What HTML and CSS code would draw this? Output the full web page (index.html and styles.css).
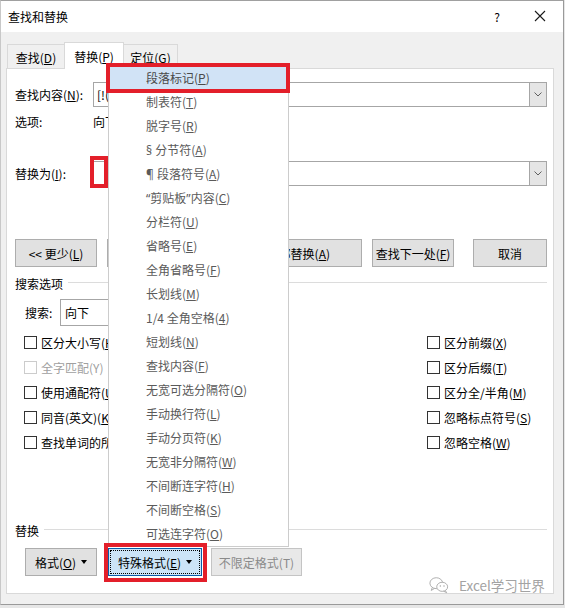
FILE: index.html
```html
<!DOCTYPE html>
<html lang="zh-CN">
<head>
<meta charset="utf-8">
<title>查找和替换</title>
<link rel="stylesheet" href="styles.css">
</head>
<body>
<div class="window">
  <div class="titlebar">
    <span class="title">查找和替换</span>
    <span class="help">?</span>
    <svg class="close" width="12" height="12" viewBox="0 0 12 12"><path d="M1 1L11 11M11 1L1 11" stroke="#1a1a1a" stroke-width="1.1" fill="none"/></svg>
  </div>
  <div class="tabs">
    <div class="tab t1">查找(<u>D</u>)</div>
    <div class="tab t2 active">替换(<u>P</u>)</div>
    <div class="tab t3">定位(<u>G</u>)</div>
  </div>
  <div class="panel">
    <div class="row row-find">
      <span class="lbl">查找内容(<u>N</u>):</span>
      <div class="combo"><span class="combo-text">[!(</span><span class="combo-btn"><svg width="8" height="5" viewBox="0 0 8 5"><path d="M0.5 0.5L4 4L7.5 0.5" stroke="#606060" fill="none"/></svg></span></div>
    </div>
    <div class="row row-opts"><span class="lbl">选项:</span><span>向下</span></div>
    <div class="row row-replace">
      <span class="lbl">替换为(<u>I</u>):</span>
      <div class="combo"><span class="combo-text"></span><span class="combo-btn"><svg width="8" height="5" viewBox="0 0 8 5"><path d="M0.5 0.5L4 4L7.5 0.5" stroke="#606060" fill="none"/></svg></span></div>
    </div>
    <div class="btnrow">
      <div class="btn b-less">&lt;&lt; 更少(<u>L</u>)</div>
      <div class="btn b-rep"></div>
      <div class="btn b-all"><span class="clip-text">全部替换(<u>A</u>)</span></div>
      <div class="btn b-next">查找下一处(<u>F</u>)</div>
      <div class="btn b-cancel">取消</div>
    </div>
    <div class="group-title g1"><span>搜索选项</span></div>
    <div class="row row-search"><span class="lbl-s">搜索:</span><div class="select">向下</div></div>
    <div class="checks">
      <div class="col col-left">
        <div class="chk"><span class="box"></span><span class="cut">区分大小写(<u>H</u>)</span></div>
        <div class="chk disabled"><span class="box"></span><span class="cut">全字匹配(Y)</span></div>
        <div class="chk"><span class="box"></span><span class="cut">使用通配符(<u>U</u>)</span></div>
        <div class="chk"><span class="box"></span><span class="cut">同音(英文)(<u>K</u>)</span></div>
        <div class="chk"><span class="box"></span><span class="cut">查找单词的所有形式(英文)(<u>W</u>)</span></div>
      </div>
      <div class="col col-right">
        <div class="chk"><span class="box"></span>区分前缀(<u>X</u>)</div>
        <div class="chk"><span class="box"></span>区分后缀(<u>T</u>)</div>
        <div class="chk"><span class="box"></span>区分全/半角(<u>M</u>)</div>
        <div class="chk"><span class="box"></span>忽略标点符号(<u>S</u>)</div>
        <div class="chk"><span class="box"></span>忽略空格(<u>W</u>)</div>
      </div>
    </div>
    <div class="group-title g2"><span>替换</span></div>
    <div class="btnrow2">
      <div class="btn b-fmt">格式(<u>O</u>)<span class="tri"></span></div>
      <div class="btn b-special">特殊格式(<u>E</u>)<span class="tri"></span></div>
      <div class="btn b-nofmt">不限定格式(T)</div>
    </div>
  </div>

  <div class="menu">
    <div class="item hl">段落标记(<u>P</u>)</div>
    <div class="item">制表符(<u>T</u>)</div>
    <div class="item">脱字号(<u>R</u>)</div>
    <div class="item"><span class="lat">§ </span>分节符(<u>A</u>)</div>
    <div class="item"><span class="lat">¶ </span>段落符号(<u>A</u>)</div>
    <div class="item"><span class="lat">“</span>剪贴板<span class="lat">”</span>内容(<u>C</u>)</div>
    <div class="item">分栏符(<u>U</u>)</div>
    <div class="item">省略号(<u>E</u>)</div>
    <div class="item">全角省略号(<u>F</u>)</div>
    <div class="item">长划线(<u>M</u>)</div>
    <div class="item">1/4 全角空格(<u>4</u>)</div>
    <div class="item">短划线(<u>N</u>)</div>
    <div class="item">查找内容(<u>F</u>)</div>
    <div class="item">无宽可选分隔符(<u>O</u>)</div>
    <div class="item">手动换行符(<u>L</u>)</div>
    <div class="item">手动分页符(<u>K</u>)</div>
    <div class="item">无宽非分隔符(<u>W</u>)</div>
    <div class="item">不间断连字符(<u>H</u>)</div>
    <div class="item">不间断空格(<u>S</u>)</div>
    <div class="item">可选连字符(<u>O</u>)</div>
  </div>

  <div class="mark m1"></div>
  <div class="mark m2"></div>
  <div class="mark m3"></div>

  <div class="watermark">
    <svg width="20" height="18" viewBox="0 0 22 19"><ellipse cx="8" cy="7.5" rx="7" ry="6" fill="none" stroke="#a8a8a8" stroke-width="1"/><path d="M3.5 12.5L2.5 15.5L6 13.3" fill="none" stroke="#a8a8a8" stroke-width="1"/><ellipse cx="14.5" cy="11.5" rx="6" ry="5" fill="#fff" stroke="#a8a8a8" stroke-width="1"/><path d="M18 15.8L19.5 18L16 16.3" fill="none" stroke="#a8a8a8" stroke-width="1"/><circle cx="12.5" cy="10.5" r="0.8" fill="#a8a8a8"/><circle cx="16.5" cy="10.5" r="0.8" fill="#a8a8a8"/></svg>
    <span>Excel学习世界</span>
  </div>
</div>
</body>
</html>
```

FILE: styles.css
```css
* { box-sizing: border-box; }
html, body { margin: 0; padding: 0; }
body {
  width: 565px;
  height: 608px;
  background: #e6e6e6;
  font-family: "Noto Sans CJK SC", "Microsoft YaHei", sans-serif;
  font-size: 12px;
  color: #000;
  overflow: hidden;
}
u { text-decoration: underline; text-underline-offset: 1px; }
.lat { font-family: "Noto Sans", "Liberation Sans", sans-serif; }

.window {
  position: relative;
  width: 564px;
  height: 605px;
  background: #f0f0f0;
  border: 1px solid #9a9a9a;
  border-left-color: #c8c8c8;
  border-top-color: #a0a0a0;
}

.titlebar {
  height: 31px;
  background: #fff;
  display: flex;
  align-items: center;
  padding-left: 7px;
  padding-bottom: 1px;
}
.title { font-size: 12px; flex: 1; }
.help { font-size: 12px; margin-right: 34px; }
.close { margin-right: 17px; }

.tabs {
  display: flex;
  align-items: flex-end;
  height: 26px;
  margin-top: 10px;
  margin-left: 6px;
  position: relative;
  z-index: 2;
}
.tab {
  height: 24px;
  display: flex;
  align-items: center;
  justify-content: center;
  border: 1px solid #d9d9d9;
  border-bottom: none;
  background: #f0f0f0;
  padding-top: 2px;
}
.t1 { width: 57px; border-right: none; }
.t2 { width: 60px; }
.t3 { width: 54px; border-left: none; }
.tab.active {
  height: 27px;
  margin-bottom: -1px;
  background: #fff;
  padding-top: 0;
}

.panel {
  position: relative;
  z-index: 1;
  margin-left: 5px;
  width: 548px;
  height: 526px;
  background: #fff;
  border: 1px solid #d9d9d9;
  padding-left: 8px;
  padding-right: 6px;
}

.row { display: flex; align-items: center; }
.lbl { width: 78px; flex: none; }
.row-find { margin-top: 13px; height: 25px; }
.row-opts { height: 28px; }
.row-replace { margin-top: 26px; height: 25px; }

.combo {
  width: 455px;
  height: 25px;
  border: 1px solid #a6a6a6;
  display: flex;
  align-items: stretch;
}
.combo-text { flex: 1; padding-left: 3px; display: flex; align-items: center; }
.combo-btn {
  width: 17px;
  background: #e5e5e5;
  border-left: 1px solid #a6a6a6;
  display: flex;
  align-items: center;
  justify-content: center;
}

.btn {
  height: 28px;
  background: #e1e1e1;
  border: 1px solid #adadad;
  display: flex;
  align-items: center;
  justify-content: center;
  flex: none;
}
.btnrow { display: flex; margin-top: 53px; }
.b-less { width: 82px; }
.b-rep { width: 117px; margin-left: 10px; }
.b-all { width: 128px; margin-left: 10px; justify-content: flex-end; padding-right: 31px; }
.clip-text { display: block; width: 42px; overflow: hidden; direction: rtl; white-space: nowrap; }
.clip-text u { direction: ltr; }
.b-next { width: 82px; margin-left: 10px; }
.b-cancel { width: 74px; margin-left: 19px; }

.group-title {
  display: flex;
  align-items: center;
  height: 16px;
}
.group-title::after {
  content: "";
  flex: 1;
  border-top: 1px solid #dcdcdc;
  margin-left: 5px;
  margin-top: -1px;
}
.g1 { margin-top: 8px; }
.g2 { margin-top: 67px; }

.row-search { margin-top: 8px; height: 27px; padding-left: 10px; }
.lbl-s { width: 35px; }
.select {
  width: 170px;
  height: 27px;
  border: 1px solid #a6a6a6;
  display: flex;
  align-items: center;
  padding-left: 4px;
}

.checks { display: flex; margin-top: 4px; padding-left: 9px; }
.col-left { width: 403px; }
.chk {
  height: 25px;
  display: flex;
  align-items: center;
  white-space: nowrap;
}
.cut { display: block; max-width: 67px; overflow: hidden; white-space: nowrap; }
.box {
  width: 13px;
  height: 13px;
  border: 1px solid #333;
  background: #fff;
  margin-right: 4px;
  flex: none;
}
.chk.disabled { color: #a0a0a0; }
.chk.disabled .box { border-color: #cccccc; }

.btnrow2 { display: flex; margin-top: 10px; padding-left: 10px; }
.b-fmt { width: 72px; }
.b-special {
  width: 94px;
  margin-left: 11px;
  background: #cce4f7;
  border-color: #0a5ca8;
  outline: 1px dotted #000;
  outline-offset: -3px;
}
.b-nofmt {
  width: 91px;
  margin-left: 9px;
  background: #e8e8e8;
  border-color: #c4c4c4;
  color: #8a8a8a;
}
.tri {
  width: 0;
  height: 0;
  border-left: 3.5px solid transparent;
  border-right: 3.5px solid transparent;
  border-top: 4px solid #000;
  margin-left: 5px;
}

.menu {
  position: absolute;
  z-index: 5;
  left: 107px;
  top: 64px;
  width: 181px;
  background: #fff;
  border: 1px solid #cccccc;
  color: #5a5a5a;
}
.item {
  display: block;
  height: 24px;
  line-height: 24px;
  padding-left: 37px;
  white-space: pre;
}
.item.hl { background: #d1e3f6; color: #4a4a4a; }

.mark {
  position: absolute;
  z-index: 6;
  border: 4px solid #e31f2a;
}
.m1 { left: 105px; top: 62px; width: 184px; height: 30px; }
.m2 { left: 89px; top: 155px; width: 18px; height: 32px; }
.m3 { left: 103px; top: 542px; width: 103px; height: 39px; }

.watermark {
  position: absolute;
  z-index: 6;
  left: 428px;
  top: 574px;
  display: flex;
  align-items: center;
  color: #a3a3a3;
  font-size: 13.5px;
}
.watermark svg { margin-right: 10px; }
```
